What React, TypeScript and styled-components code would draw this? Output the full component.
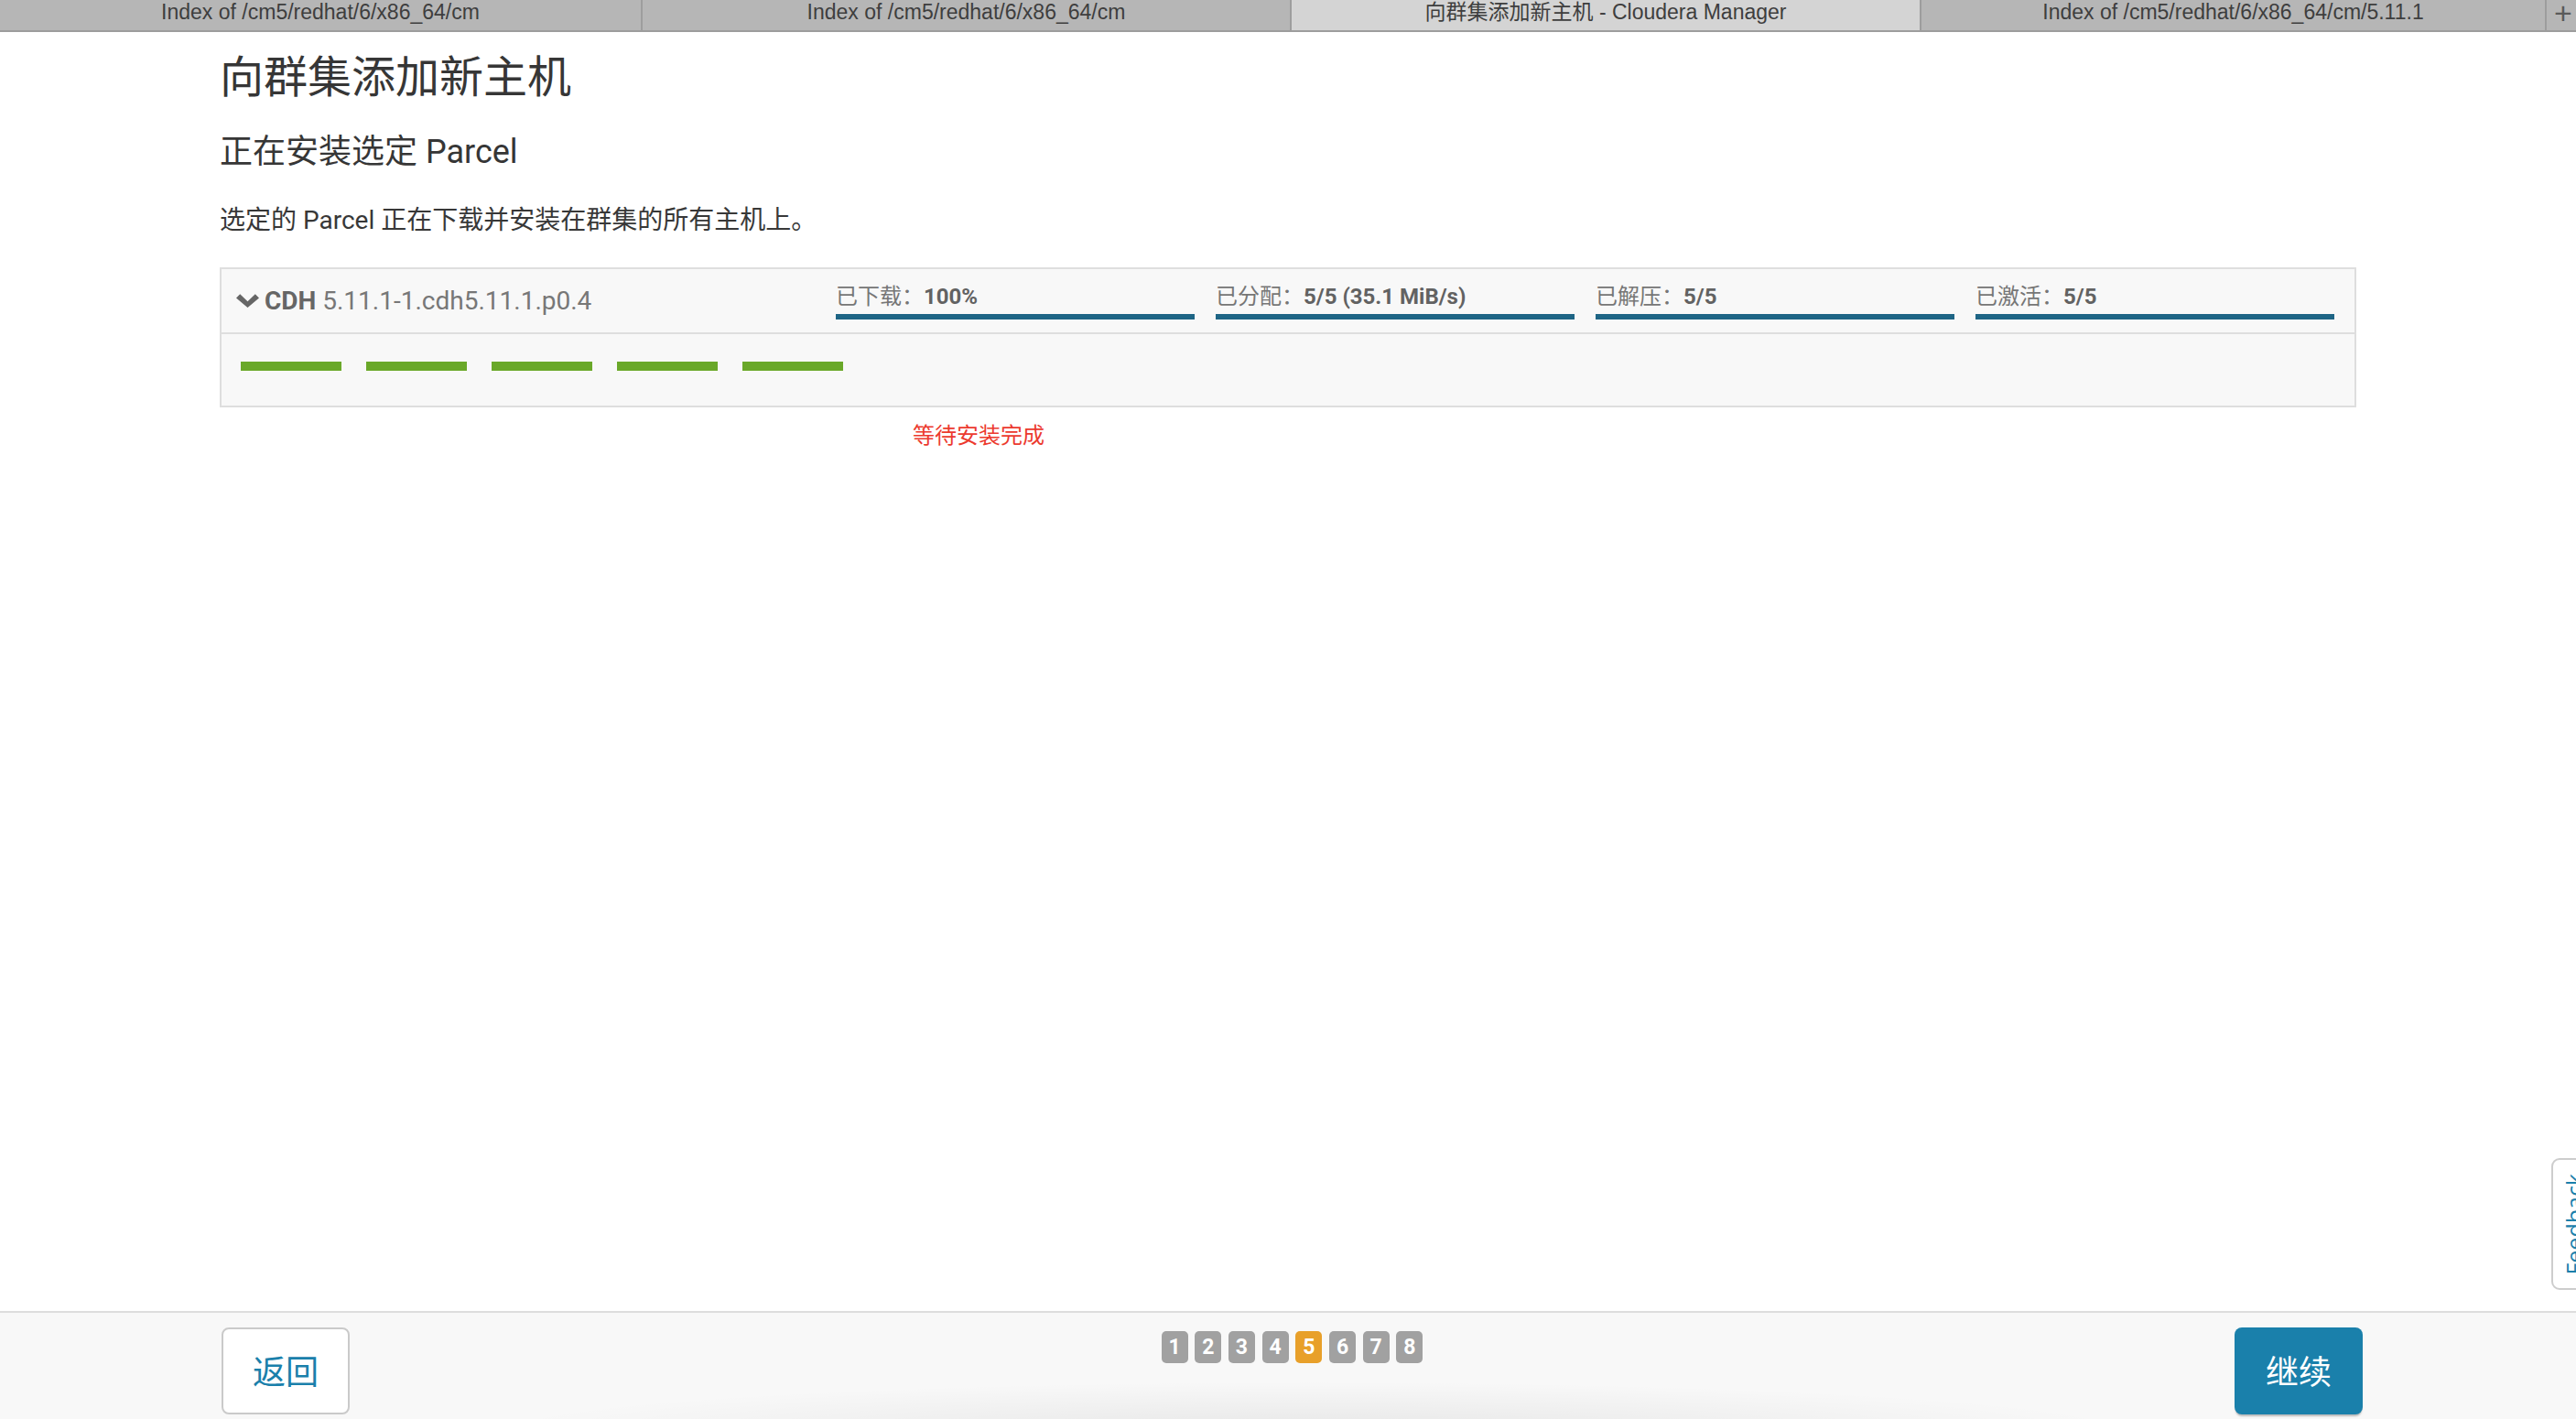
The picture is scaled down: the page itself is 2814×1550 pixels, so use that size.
import styled, { createGlobalStyle } from 'styled-components';

const GlobalStyle = createGlobalStyle`
  html, body {
    margin: 0;
    padding: 0;
    background: #fff;
    overflow: hidden;
  }
  body {
    font-family: Roboto, "Noto Sans CJK SC", sans-serif;
    color: #333;
  }
`;

const Page = styled.div`
  display: flex;
  flex-direction: column;
  height: 100vh;
  position: relative;
`;

const TabBar = styled.div`
  display: flex;
  height: 33px;
  background: #b6b6b6;
  border-bottom: 2px solid #9d9d9d;
  flex-shrink: 0;
  white-space: nowrap;
`;

const Tab = styled.div<{ $w: number; $active?: boolean; $first?: boolean }>`
  box-sizing: border-box;
  width: ${({ $w }) => $w}px;
  flex-shrink: 0;
  background: ${({ $active }) => ($active ? '#d4d4d4' : '#b6b6b6')};
  border-left: ${({ $first }) => ($first ? 'none' : '2px solid #9d9d9d')};
  font-family: "Liberation Sans", "Noto Sans CJK SC", sans-serif;
  font-size: 23px;
  line-height: 26px;
  color: #3e3e3e;
  text-align: center;
  overflow: hidden;
`;

const PlusTab = styled(Tab)`
  font-size: 34px;
  line-height: 28px;
  text-align: left;
  padding-left: 8px;
  color: #5a5a5a;
`;

const Main = styled.main`
  flex: 1;
  padding: 0 240px;
`;

const Title = styled.h1`
  margin: 20px 0 0;
  font-size: 48px;
  line-height: 60px;
  font-weight: 400;
  color: #363636;
`;

const SubTitle = styled.h2`
  margin: 29px 0 0;
  font-size: 36px;
  line-height: 44px;
  font-weight: 400;
  color: #363636;
`;

const Description = styled.p`
  margin: 35px 0 0;
  font-size: 28px;
  line-height: 36px;
  color: #383838;
`;

const Card = styled.div`
  margin-top: 33px;
  border: 2px solid #dedede;
  background: #f8f8f8;
`;

const CardHeader = styled.div`
  display: grid;
  grid-template-columns: 1fr repeat(4, 392px);
  column-gap: 23px;
  padding: 0 22px 0 16px;
  border-bottom: 2px solid #dedede;
`;

const ParcelName = styled.div`
  display: flex;
  align-items: center;
  gap: 6px;
  font-size: 28px;
  color: #777;
`;

const Product = styled.span`
  font-weight: 700;
  color: #666;
`;

const StatusCol = styled.div`
  padding: 15px 0 14px;
`;

const StatusLabel = styled.div`
  font-size: 24px;
  line-height: 30px;
  color: #767676;
  white-space: nowrap;
`;

const StatusValue = styled.span`
  font-weight: 700;
  color: #626262;
`;

const ProgressBar = styled.div`
  margin-top: 4px;
  height: 6px;
  background: #1e6585;
`;

const CardBody = styled.div`
  display: flex;
  gap: 27px;
  padding: 30px 21px 38px;
`;

const HostDash = styled.div`
  width: 110px;
  height: 10px;
  background: #6aa829;
`;

const WaitMessage = styled.div`
  margin-top: 16px;
  padding-left: 757px;
  font-size: 24px;
  line-height: 30px;
  color: #ec3a2e;
`;

const Footer = styled.footer`
  flex-shrink: 0;
  height: 118px;
  box-sizing: border-box;
  border-top: 2px solid #dddddd;
  background:
    radial-gradient(ellipse 900px 55px at 51% 112%, rgba(0, 0, 0, 0.07), rgba(0, 0, 0, 0) 100%),
    #f8f8f8;
  display: grid;
  grid-template-columns: 1fr auto 1fr;
  align-items: start;
  padding: 16px 233px 0 242px;
`;

const Button = styled.button<{ $primary?: boolean }>`
  box-sizing: border-box;
  width: 140px;
  height: 95px;
  padding: 0 0 4px;
  border-radius: 8px;
  font-family: "Noto Sans CJK SC", sans-serif;
  font-size: 36px;
  cursor: pointer;
  border: ${({ $primary }) => ($primary ? 'none' : '2px solid #cacaca')};
  background: ${({ $primary }) => ($primary ? '#1a80ab' : '#fff')};
  color: ${({ $primary }) => ($primary ? '#fff' : '#1a80ab')};
  box-shadow: ${({ $primary }) => ($primary ? '0 3px 2px -1px rgba(0,0,0,0.25)' : 'none')};
  justify-self: ${({ $primary }) => ($primary ? 'end' : 'start')};
`;

const Steps = styled.div`
  display: flex;
  gap: 7.7px;
  margin-top: 4px;
`;

const Step = styled.div<{ $active?: boolean }>`
  width: 29px;
  height: 35px;
  border-radius: 5px;
  background: ${({ $active }) => ($active ? '#e8a02a' : '#a1a1a1')};
  color: #fff;
  font-weight: 700;
  font-size: 23px;
  line-height: 35px;
  text-align: center;
`;

const FeedbackTab = styled.div`
  position: fixed;
  top: 1265px;
  right: -22px;
  width: 49px;
  height: 144px;
  box-sizing: border-box;
  border: 2px solid #cdcdcd;
  border-radius: 9px 0 0 9px;
  background: #fff;
  display: flex;
  align-items: center;
  justify-content: center;
`;

const FeedbackText = styled.span`
  writing-mode: vertical-rl;
  transform: rotate(180deg);
  font-family: "Open Sans", sans-serif;
  font-size: 25px;
  color: #1a80ab;
`;

const Chevron = () => (
  <svg width="25" height="15" viewBox="0 0 25 15">
    <polygon points="0,4.4 4.2,0.2 12.5,8.2 20.8,0.2 25,4.4 12.5,15" fill="#666" />
  </svg>
);

const tabs = [
  { label: 'Index of /cm5/redhat/6/x86_64/cm', width: 700 },
  { label: 'Index of /cm5/redhat/6/x86_64/cm', width: 709 },
  { label: '向群集添加新主机 - Cloudera Manager', width: 688, active: true },
  { label: 'Index of /cm5/redhat/6/x86_64/cm/5.11.1', width: 683 },
];

const statuses = [
  { label: '已下载：', value: '100%' },
  { label: '已分配：', value: '5/5 (35.1 MiB/s)' },
  { label: '已解压：', value: '5/5' },
  { label: '已激活：', value: '5/5' },
];

const hosts = [1, 2, 3, 4, 5];
const steps = [1, 2, 3, 4, 5, 6, 7, 8];
const currentStep = 5;

export default function App() {
  return (
    <Page>
      <GlobalStyle />
      <TabBar>
        {tabs.map((t, i) => (
          <Tab key={i} $w={t.width} $active={t.active} $first={i === 0}>
            {t.label}
          </Tab>
        ))}
        <PlusTab $w={60}>+</PlusTab>
      </TabBar>

      <Main>
        <Title>向群集添加新主机</Title>
        <SubTitle>正在安装选定 Parcel</SubTitle>
        <Description>选定的 Parcel 正在下载并安装在群集的所有主机上。</Description>

        <Card>
          <CardHeader>
            <ParcelName>
              <Chevron />
              <span>
                <Product>CDH</Product> 5.11.1-1.cdh5.11.1.p0.4
              </span>
            </ParcelName>
            {statuses.map((s) => (
              <StatusCol key={s.label}>
                <StatusLabel>
                  {s.label}
                  <StatusValue>{s.value}</StatusValue>
                </StatusLabel>
                <ProgressBar />
              </StatusCol>
            ))}
          </CardHeader>
          <CardBody>
            {hosts.map((h) => (
              <HostDash key={h} />
            ))}
          </CardBody>
        </Card>
        <WaitMessage>等待安装完成</WaitMessage>
      </Main>

      <Footer>
        <Button>返回</Button>
        <Steps>
          {steps.map((n) => (
            <Step key={n} $active={n === currentStep}>
              {n}
            </Step>
          ))}
        </Steps>
        <Button $primary>继续</Button>
      </Footer>

      <FeedbackTab>
        <FeedbackText>Feedback</FeedbackText>
      </FeedbackTab>
    </Page>
  );
}
